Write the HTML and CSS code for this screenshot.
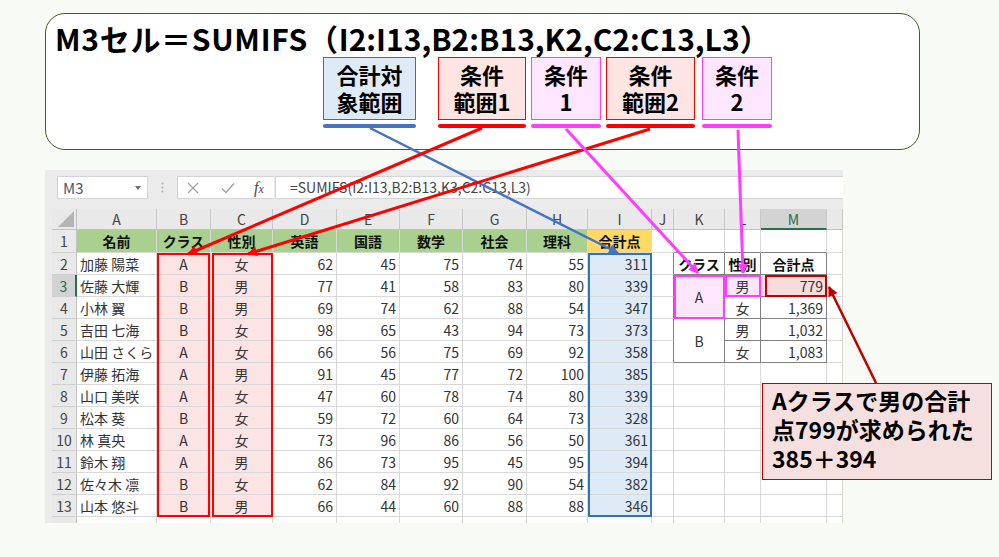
FILE: index.html
```html
<!DOCTYPE html>
<html lang="ja">
<head>
<meta charset="utf-8">
<title>SUMIFS 複数条件の合計</title>
<link rel="stylesheet" href="styles.css">
</head>
<body>
<div class="page">

  <section class="formula-card">
    <h1 class="formula-title"><span class="lead">M3セル＝SUMIFS（</span>I2:I13,B2:B13,K2,C2:C13,L3）</h1>
    <div class="args">
      <div class="arg arg-sum">
        <div class="arg-box">合計対<br>象範囲</div>
        <div class="arg-line"></div>
      </div>
      <div class="arg arg-range1">
        <div class="arg-box">条件<br>範囲1</div>
        <div class="arg-line"></div>
      </div>
      <div class="arg arg-cond1">
        <div class="arg-box">条件<br>1</div>
        <div class="arg-line"></div>
      </div>
      <div class="arg arg-range2">
        <div class="arg-box">条件<br>範囲2</div>
        <div class="arg-line"></div>
      </div>
      <div class="arg arg-cond2">
        <div class="arg-box">条件<br>2</div>
        <div class="arg-line"></div>
      </div>
    </div>
  </section>

  <section class="excel">
    <div class="fbar">
      <div class="namebox">
        <span>M3</span>
        <svg class="dd" width="6" height="4" viewBox="0 0 6 4"><path d="M0 0H6L3 4Z" fill="#6b6b6b"/></svg>
      </div>
      <div class="grip">
        <svg width="3" height="11" viewBox="0 0 3 11"><circle cx="1.5" cy="1.5" r="1" fill="#b0b0b0"/><circle cx="1.5" cy="5.5" r="1" fill="#b0b0b0"/><circle cx="1.5" cy="9.5" r="1" fill="#b0b0b0"/></svg>
      </div>
      <div class="fx-tools">
        <span class="tool tool-x"><svg width="12" height="12" viewBox="0 0 12 12"><path d="M1 1L11 11M11 1L1 11" stroke="#a3a3a3" stroke-width="1.3"/></svg></span>
        <span class="tool tool-ok"><svg width="14" height="12" viewBox="0 0 14 12"><path d="M1 6.5L5 10.5L13 1.5" stroke="#a3a3a3" stroke-width="1.4" fill="none"/></svg></span>
        <span class="tool tool-fx"><i>f</i><i class="sub">x</i></span>
      </div>
      <div class="fx-input">=SUMIFS(I2:I13,B2:B13,K3,C2:C13,L3)</div>
    </div>

    <div class="sheet">
      <!-- column headers -->
      <div class="c corner"><i class="tri"></i></div>
      <div class="c h">A</div><div class="c h">B</div><div class="c h">C</div><div class="c h">D</div><div class="c h">E</div><div class="c h">F</div><div class="c h">G</div><div class="c h">H</div><div class="c h">I</div><div class="c h">J</div><div class="c h">K</div><div class="c h">L</div><div class="c h hs">M</div><div class="c h"></div>

      <!-- row 1 -->
      <div class="c r">1</div>
      <div class="c g">名前</div><div class="c g">クラス</div><div class="c g">性別</div><div class="c g">英語</div><div class="c g">国語</div><div class="c g">数学</div><div class="c g">社会</div><div class="c g">理科</div><div class="c g gold">合計点</div>
      <div class="c"></div><div class="c tb"></div><div class="c tb"></div><div class="c tb"></div><div class="c"></div>

      <!-- row 2 -->
      <div class="c r">2</div>
      <div class="c">加藤 陽菜</div><div class="c p m">A</div><div class="c p m">女</div>
      <div class="c n">62</div><div class="c n">45</div><div class="c n">75</div><div class="c n">74</div><div class="c n">55</div><div class="c bl n">311</div>
      <div class="c tr"></div><div class="c t m th">クラス</div><div class="c t m th">性別</div><div class="c t m th">合計点</div><div class="c"></div>

      <!-- row 3 -->
      <div class="c r rs">3</div>
      <div class="c">佐藤 大輝</div><div class="c p m">B</div><div class="c p m">男</div>
      <div class="c n">77</div><div class="c n">41</div><div class="c n">58</div><div class="c n">83</div><div class="c n">80</div><div class="c bl n">339</div>
      <div class="c tr"></div><div class="c t m pk span2">A</div><div class="c t m pk">男</div><div class="c t n rd">779</div><div class="c"></div>

      <!-- row 4 -->
      <div class="c r">4</div>
      <div class="c">小林 翼</div><div class="c p m">B</div><div class="c p m">男</div>
      <div class="c n">69</div><div class="c n">74</div><div class="c n">62</div><div class="c n">88</div><div class="c n">54</div><div class="c bl n">347</div>
      <div class="c tr"></div><div class="c t m">女</div><div class="c t n">1,369</div><div class="c"></div>

      <!-- row 5 -->
      <div class="c r">5</div>
      <div class="c">吉田 七海</div><div class="c p m">B</div><div class="c p m">女</div>
      <div class="c n">98</div><div class="c n">65</div><div class="c n">43</div><div class="c n">94</div><div class="c n">73</div><div class="c bl n">373</div>
      <div class="c tr"></div><div class="c t m span2">B</div><div class="c t m">男</div><div class="c t n">1,032</div><div class="c"></div>

      <!-- row 6 -->
      <div class="c r">6</div>
      <div class="c">山田 さくら</div><div class="c p m">A</div><div class="c p m">女</div>
      <div class="c n">66</div><div class="c n">56</div><div class="c n">75</div><div class="c n">69</div><div class="c n">92</div><div class="c bl n">358</div>
      <div class="c tr"></div><div class="c t m">女</div><div class="c t n">1,083</div><div class="c"></div>

      <!-- row 7 -->
      <div class="c r">7</div>
      <div class="c">伊藤 拓海</div><div class="c p m">A</div><div class="c p m">男</div>
      <div class="c n">91</div><div class="c n">45</div><div class="c n">77</div><div class="c n">72</div><div class="c n">100</div><div class="c bl n">385</div>
      <div class="c"></div><div class="c"></div><div class="c"></div><div class="c"></div><div class="c"></div>

      <!-- row 8 -->
      <div class="c r">8</div>
      <div class="c">山口 美咲</div><div class="c p m">A</div><div class="c p m">女</div>
      <div class="c n">47</div><div class="c n">60</div><div class="c n">78</div><div class="c n">74</div><div class="c n">80</div><div class="c bl n">339</div>
      <div class="c"></div><div class="c"></div><div class="c"></div><div class="c"></div><div class="c"></div>

      <!-- row 9 -->
      <div class="c r">9</div>
      <div class="c">松本 葵</div><div class="c p m">B</div><div class="c p m">女</div>
      <div class="c n">59</div><div class="c n">72</div><div class="c n">60</div><div class="c n">64</div><div class="c n">73</div><div class="c bl n">328</div>
      <div class="c"></div><div class="c"></div><div class="c"></div><div class="c"></div><div class="c"></div>

      <!-- row 10 -->
      <div class="c r">10</div>
      <div class="c">林 真央</div><div class="c p m">A</div><div class="c p m">女</div>
      <div class="c n">73</div><div class="c n">96</div><div class="c n">86</div><div class="c n">56</div><div class="c n">50</div><div class="c bl n">361</div>
      <div class="c"></div><div class="c"></div><div class="c"></div><div class="c"></div><div class="c"></div>

      <!-- row 11 -->
      <div class="c r">11</div>
      <div class="c">鈴木 翔</div><div class="c p m">A</div><div class="c p m">男</div>
      <div class="c n">86</div><div class="c n">73</div><div class="c n">95</div><div class="c n">45</div><div class="c n">95</div><div class="c bl n">394</div>
      <div class="c"></div><div class="c"></div><div class="c"></div><div class="c"></div><div class="c"></div>

      <!-- row 12 -->
      <div class="c r">12</div>
      <div class="c">佐々木 凛</div><div class="c p m">B</div><div class="c p m">女</div>
      <div class="c n">62</div><div class="c n">84</div><div class="c n">92</div><div class="c n">90</div><div class="c n">54</div><div class="c bl n">382</div>
      <div class="c"></div><div class="c"></div><div class="c"></div><div class="c"></div><div class="c"></div>

      <!-- row 13 -->
      <div class="c r">13</div>
      <div class="c">山本 悠斗</div><div class="c p m">B</div><div class="c p m">男</div>
      <div class="c n">66</div><div class="c n">44</div><div class="c n">60</div><div class="c n">88</div><div class="c n">88</div><div class="c bl n">346</div>
      <div class="c"></div><div class="c"></div><div class="c"></div><div class="c"></div><div class="c"></div>

      <!-- row 14 -->
      <div class="c r">14</div>
      <div class="c"></div><div class="c"></div><div class="c"></div><div class="c"></div><div class="c"></div><div class="c"></div><div class="c"></div><div class="c"></div><div class="c"></div><div class="c"></div><div class="c"></div><div class="c"></div><div class="c"></div><div class="c"></div>

      <!-- range outlines drawn over the cells -->
      <div class="mark mark-b"></div>
      <div class="mark mark-c"></div>
      <div class="mark mark-i"></div>
      <div class="mark mark-k"></div>
      <div class="mark mark-l"></div>
      <div class="mark mark-m"></div>
    </div>
  </section>

  <div class="note">Aクラスで男の合計<br>点799が求められた<br>385＋394</div>

  <svg class="arrows" width="999" height="557" viewBox="0 0 999 557">
    <defs>
      <marker id="head-blue" viewBox="0 0 10 10" refX="9" refY="5" markerWidth="12" markerHeight="10" markerUnits="userSpaceOnUse" orient="auto"><path d="M0 0L10 5L0 10Z" fill="#4472c4"/></marker>
      <marker id="head-red" viewBox="0 0 10 10" refX="9" refY="5" markerWidth="12" markerHeight="10" markerUnits="userSpaceOnUse" orient="auto"><path d="M0 0L10 5L0 10Z" fill="#ff0000"/></marker>
      <marker id="head-pink" viewBox="0 0 10 10" refX="9" refY="5" markerWidth="12" markerHeight="10" markerUnits="userSpaceOnUse" orient="auto"><path d="M0 0L10 5L0 10Z" fill="#ff3cff"/></marker>
      <marker id="head-dark" viewBox="0 0 10 10" refX="9" refY="5" markerWidth="12" markerHeight="10" markerUnits="userSpaceOnUse" orient="auto"><path d="M0 0L10 5L0 10Z" fill="#c00000"/></marker>
    </defs>
    <line x1="370" y1="128" x2="618" y2="253" stroke="#4472c4" stroke-width="2.5" marker-end="url(#head-blue)"/>
    <line x1="482" y1="128" x2="188" y2="254" stroke="#ff0000" stroke-width="3" marker-end="url(#head-red)"/>
    <line x1="650" y1="129" x2="248" y2="254" stroke="#ff0000" stroke-width="3" marker-end="url(#head-red)"/>
    <line x1="566" y1="129" x2="698" y2="273" stroke="#ff3cff" stroke-width="3" marker-end="url(#head-pink)"/>
    <line x1="738" y1="130" x2="743" y2="273" stroke="#ff3cff" stroke-width="3" marker-end="url(#head-pink)"/>
    <line x1="876" y1="383" x2="829" y2="287" stroke="#c00000" stroke-width="2.5" marker-end="url(#head-dark)"/>
  </svg>

</div>
</body>
</html>
```

FILE: styles.css
```css
* { box-sizing: border-box; }

html, body {
  margin: 0;
  padding: 0;
}

body {
  background: #f8faf5;
  font-family: "Noto Sans CJK JP", "Noto Sans", sans-serif;
  color: #000;
}

.page {
  position: relative;
  width: 999px;
  height: 557px;
  overflow: hidden;
  padding-top: 13px;
}

/* ---------- formula explanation card ---------- */
.formula-card {
  margin-left: 45px;
  width: 875px;
  height: 137px;
  border: 1px solid #3e5b2a;
  border-radius: 20px;
  background: #fff;
  padding: 5px 0 0 9px;
}

.formula-title {
  margin: 0;
  font-size: 30px;
  font-weight: 700;
  line-height: 38px;
  white-space: nowrap;
}

.formula-title .lead { letter-spacing: 0.7px; }

.args {
  display: flex;
  padding-left: 268px;
}

.arg {
  display: flex;
  flex-direction: column;
}

.arg-box {
  height: 63px;
  border: 1px solid;
  padding-top: 3px;
  font-size: 22px;
  font-weight: 700;
  line-height: 27px;
  text-align: center;
  white-space: nowrap;
}

.arg-line {
  height: 4px;
  margin-top: 4px;
  border-radius: 2px;
}

.arg-sum { width: 93px; margin-right: 22px; }
.arg-range1 { width: 88px; margin-right: 5px; }
.arg-cond1 { width: 70px; margin-right: 5px; }
.arg-range2 { width: 89px; margin-right: 7px; }
.arg-cond2 { width: 70px; }

.arg-sum .arg-box { border-color: #2e75b6; background: #deebf7; }
.arg-sum .arg-line { background: #4472c4; }

.arg-range1 .arg-box,
.arg-range2 .arg-box { border-color: #ff0000; background: #ffe4e4; }
.arg-range1 .arg-line,
.arg-range2 .arg-line { background: #ff0000; }

.arg-cond1 .arg-box,
.arg-cond2 .arg-box { border-color: #ff3cff; background: #ffe6ff; }
.arg-cond1 .arg-line,
.arg-cond2 .arg-line { background: #ff3cff; }

/* ---------- spreadsheet window ---------- */
.excel {
  margin: 20px 0 0 45px;
  width: 798px;
  height: 353px;
  background: #ebebeb;
  overflow: hidden;
}

.fbar {
  display: flex;
  align-items: flex-start;
  height: 39px;
  padding: 6px 0 0 12px;
}

.namebox {
  width: 91px;
  height: 23px;
  background: #fff;
  border: 1px solid #d4d4d4;
  padding: 0 6px 0 5px;
  display: flex;
  align-items: center;
  justify-content: space-between;
  font-size: 15px;
  color: #505a64;
}

.grip {
  width: 29px;
  height: 23px;
  display: flex;
  align-items: center;
  justify-content: center;
}

.fx-tools {
  width: 97px;
  height: 23px;
  background: #fff;
  border: 1px solid #d4d4d4;
  border-right: none;
  display: flex;
  align-items: center;
}

.tool {
  display: flex;
  align-items: center;
  justify-content: center;
  height: 21px;
}

.tool-x { width: 30px; }
.tool-ok { width: 40px; }
.tool-fx {
  width: 22px;
  font-family: "Liberation Serif", serif;
  font-size: 16px;
  color: #4a4a4a;
}
.tool-fx .sub { font-size: 12px; margin-top: 4px; }

.fx-input {
  flex: 1;
  height: 23px;
  margin-left: 1px;
  background: #fff;
  border: 1px solid #d4d4d4;
  border-right: none;
  padding-left: 14px;
  font-size: 14px;
  line-height: 21px;
  color: #454545;
  white-space: nowrap;
}

/* ---------- cell grid ---------- */
.sheet {
  position: relative;
  margin-left: 7px;
  display: grid;
  grid-template-columns: 25px 80px 54px 62px 64px 63px 63px 64px 61px 64px 22px 51px 36px 66px 16px;
  grid-template-rows: 21px 23px repeat(13, 22px);
  background: #fff;
}

.c {
  display: flex;
  align-items: center;
  border-right: 1px solid #d9d9d9;
  border-bottom: 1px solid #d9d9d9;
  background: #fff;
  padding: 0 3px;
  font-size: 14px;
  color: #333;
  white-space: nowrap;
  overflow: hidden;
}

.m { justify-content: center; }
.n { justify-content: flex-end; }

.h {
  justify-content: center;
  background: #e9e9e9;
  color: #444;
  border-right-color: #c8c8c8;
  border-bottom-color: #c2c2c2;
}

.hs {
  background: #d3d3d3;
  color: #1e7145;
  border-bottom: 2px solid #217346;
}

.r {
  justify-content: center;
  background: #e9e9e9;
  color: #444;
  padding: 0;
  border-right-color: #c2c2c2;
  border-bottom-color: #cfcfcf;
}

.rs {
  background: #d3d3d3;
  color: #1e7145;
  border-right: 2px solid #217346;
}

.corner {
  justify-content: flex-end;
  align-items: flex-end;
  background: #e9e9e9;
  padding: 0 2px 2px 0;
  border-right-color: #c2c2c2;
  border-bottom-color: #c2c2c2;
}

.tri {
  display: block;
  width: 16px;
  height: 16px;
  background: #b5b5b5;
  clip-path: polygon(100% 0, 100% 100%, 0 100%);
}

.g {
  justify-content: center;
  background: #a9d08e;
  font-weight: 700;
  color: #111;
}

.gold { background: #ffd966; }

.p { background: #fde4e4; }
.bl { background: #deebf7; }

/* summary table */
.tb { border-bottom-color: #808080; }
.tr { border-right-color: #808080; }
.t {
  border-right-color: #808080;
  border-bottom-color: #808080;
}
.th { font-weight: 700; color: #111; }
.pk { background: #ffe6ff; }
.rd { background: #f8dcdc; }
.span2 { grid-row: span 2; }

/* range outlines */
.mark {
  position: absolute;
  inset: 0;
  pointer-events: none;
}

.mark-b { grid-column: 3 / 4; grid-row: 3 / 15; border: 2px solid #ff0000; right: 1px; }
.mark-c { grid-column: 4 / 5; grid-row: 3 / 15; border: 2px solid #ff0000; left: 1px; }
.mark-i { grid-column: 10 / 11; grid-row: 3 / 15; border: 2px solid #2e75b6; }
.mark-k { grid-column: 12 / 13; grid-row: 4 / 6; border: 2px solid #ff3cff; }
.mark-l { grid-column: 13 / 14; grid-row: 4 / 5; border: 2px solid #ff3cff; }
.mark-m { grid-column: 14 / 15; grid-row: 4 / 5; border: 2px solid #c00000; left: 4px; }

/* ---------- result note ---------- */
.note {
  position: absolute;
  left: 762px;
  top: 383px;
  width: 230px;
  height: 97px;
  background: #f5dfdf;
  border: 1px solid #c00000;
  padding: 2px 0 0 9px;
  font-size: 23px;
  font-weight: 700;
  line-height: 29px;
  white-space: nowrap;
}

/* ---------- connector arrows ---------- */
.arrows {
  position: absolute;
  left: 0;
  top: 0;
  pointer-events: none;
}
```
